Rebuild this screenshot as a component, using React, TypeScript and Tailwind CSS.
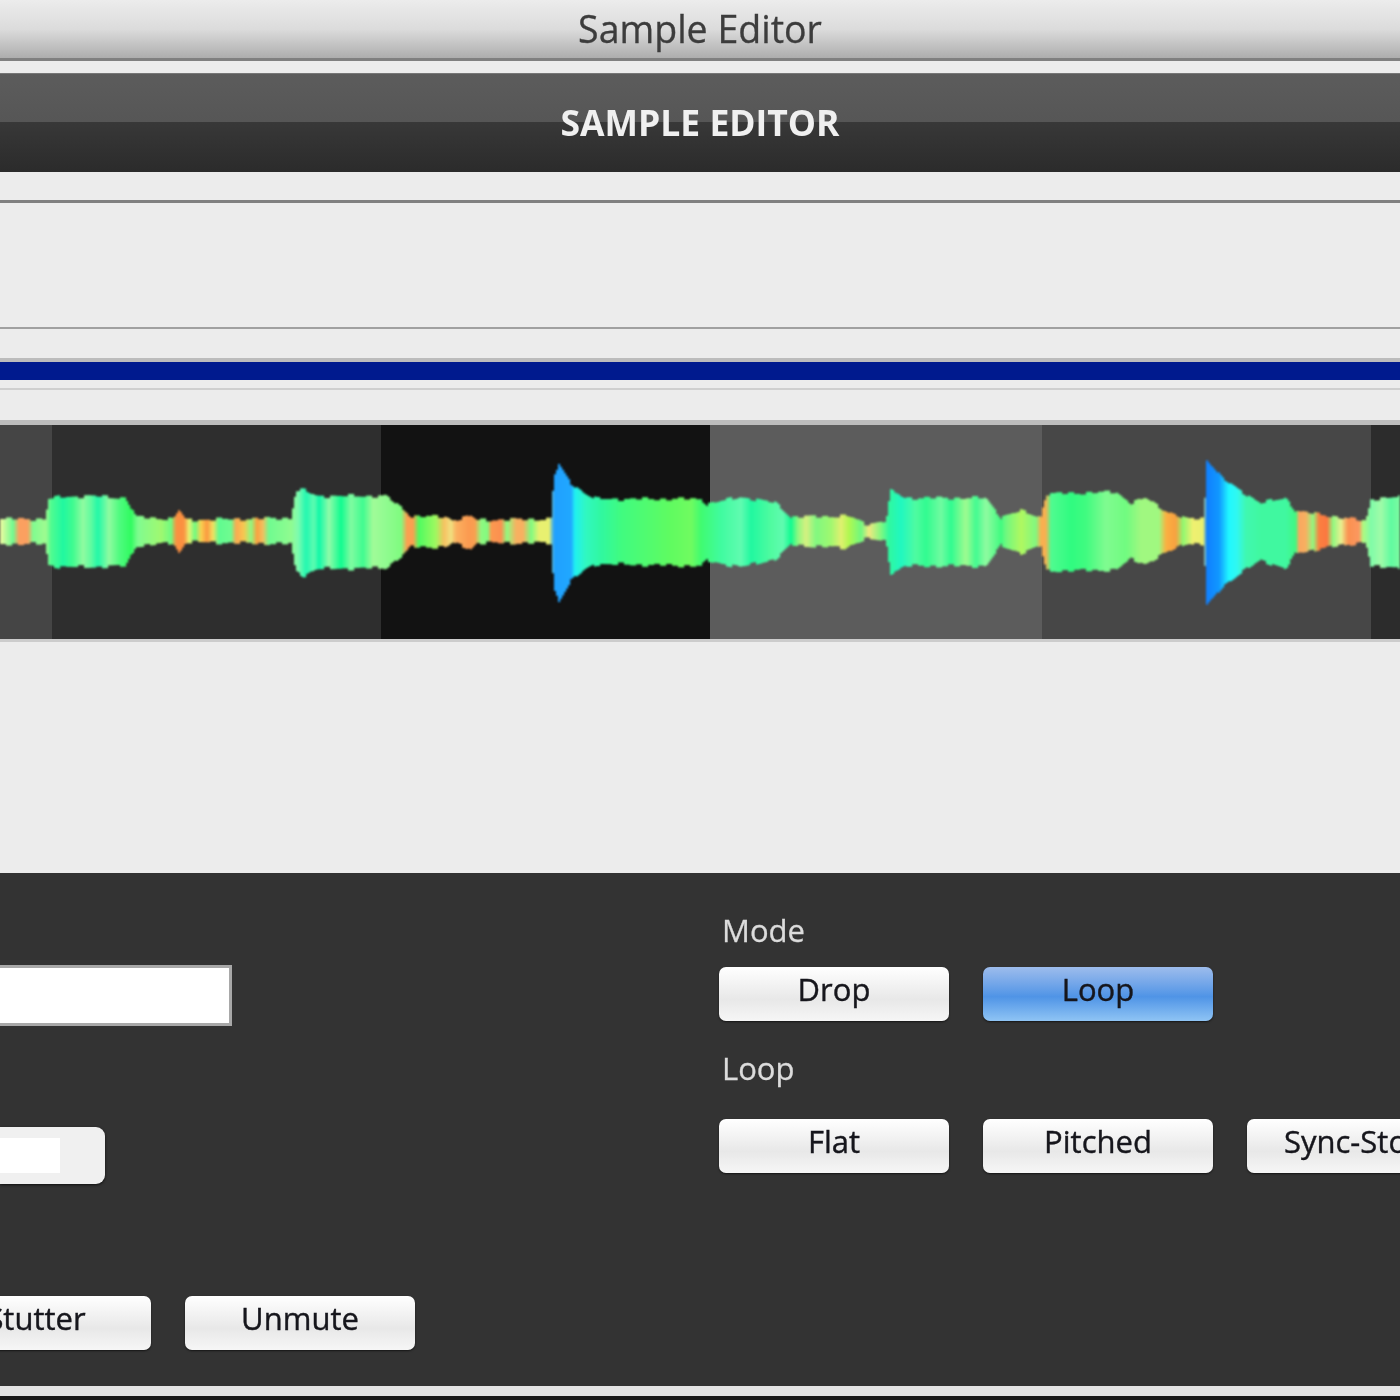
import React from 'react';

const FONT = "font-['Open_Sans','Noto_Sans',sans-serif]";

// x, height above centre, height below centre
const envelope: [number, number, number][] = [
  [0, 12, 13], [44, 12, 13], [48, 32, 34], [60, 34, 36], [90, 35, 36], [125, 33, 35], [135, 14, 15], [172, 12, 12], [178, 21, 22], [185, 11, 11],
  [290, 13, 13], [295, 40, 40], [303, 41, 45], [315, 35, 38], [385, 35, 37], [402, 22, 24], [410, 15, 16], [445, 14, 16], [452, 11, 12],
  [470, 15, 18], [476, 11, 12], [550, 12, 12], [553, 55, 58], [558, 66, 70], [570, 48, 50], [585, 37, 38], [595, 32, 33], [700, 32, 35], [706, 27, 30],
  [740, 34, 36], [775, 28, 28], [790, 14, 14], [846, 15, 17], [850, 14, 14], [865, 7, 8], [885, 10, 10], [890, 40, 42], [905, 33, 35], [985, 33, 35], [1000, 14, 15],
  [1020, 20, 22], [1040, 14, 15], [1045, 37, 40], [1115, 39, 39], [1130, 28, 28], [1145, 33, 33], [1165, 20, 22], [1185, 12, 12], [1203, 13, 14],
  [1206, 72, 75], [1222, 52, 55], [1240, 40, 42], [1260, 28, 29], [1285, 33, 38], [1295, 20, 22], [1330, 15, 16], [1365, 10, 11], [1370, 32, 36], [1400, 34, 36],
];

// colour stops along the wave, blended between neighbours
const stops: [number, string][] = [
  [0, '#e8fba0'], [12, '#70fb90'], [18, '#fba060'], [27, '#fba060'], [32, '#80fb90'], [45, '#a0fb90'], [50, '#50fb90'], [62, '#20f8a0'], [72, '#40fb90'], [82, '#90fba0'],
  [90, '#60fba0'], [97, '#20f8a8'], [108, '#90fba0'], [118, '#50fb80'], [130, '#30fb60'], [137, '#80fb90'], [160, '#a0f870'], [170, '#70fb80'], [175, '#fb9040'], [183, '#fb9040'],
  [188, '#e8f070'], [194, '#70fb80'], [200, '#f8d050'], [206, '#fb9a40'], [212, '#f0e060'], [218, '#60fb90'], [230, '#70fb90'], [235, '#fba850'], [243, '#f8c850'], [250, '#90f880'],
  [256, '#fba040'], [262, '#f0c060'], [268, '#70fb90'], [290, '#90fb90'], [297, '#80fbb0'], [305, '#20f8b0'], [313, '#60fbb0'], [318, '#10f8a8'], [328, '#90fba8'], [340, '#10fb90'],
  [350, '#80fba0'], [362, '#40fb90'], [372, '#a0fb98'], [385, '#90fb90'], [400, '#80fb80'], [406, '#fba050'], [412, '#fba050'], [418, '#50fb60'], [435, '#a0f860'], [443, '#f8c060'],
  [450, '#f0e080'], [455, '#fbb060'], [468, '#fb9a50'], [474, '#f8a050'], [480, '#90f880'], [487, '#80fb80'], [490, '#fb9a50'], [500, '#fb9050'], [506, '#90fb80'], [515, '#f8b060'],
  [522, '#f8b060'], [530, '#80fb80'], [538, '#e8f070'], [548, '#e8f070'], [553, '#20a0ff'], [570, '#20a8ff'], [574, '#20f0f0'], [585, '#30f8c0'], [600, '#30f8a0'], [620, '#40fb80'],
  [645, '#50fb70'], [670, '#60fb60'], [690, '#70fb60'], [700, '#40fb70'], [720, '#40fba0'], [740, '#60fbb0'], [750, '#20f8a0'], [770, '#50fba0'], [782, '#60fbb0'], [790, '#10fb90'],
  [797, '#90f880'], [805, '#d8f080'], [815, '#80f880'], [830, '#a0f870'], [840, '#e0f070'], [848, '#b0f850'], [860, '#70f880'], [868, '#f0e880'], [880, '#80f880'], [888, '#30f8a0'],
  [900, '#20f8c0'], [915, '#50fba0'], [925, '#30fb90'], [940, '#70fba0'], [950, '#30fb90'], [965, '#a0fb90'], [975, '#40fb90'], [985, '#90fba0'], [1000, '#40fb80'], [1005, '#70f880'],
  [1020, '#b0f860'], [1035, '#80f880'], [1040, '#f8b050'], [1045, '#f8b050'], [1050, '#50fb90'], [1070, '#30fb80'], [1085, '#40fb80'], [1105, '#80fb90'], [1125, '#70fb80'], [1140, '#a0f880'],
  [1158, '#a0f880'], [1165, '#fbb040'], [1175, '#f8a040'], [1182, '#90f870'], [1192, '#f0f070'], [1202, '#e8f070'], [1206, '#1080ff'], [1218, '#1098ff'], [1228, '#20f8ff'], [1236, '#30f8f0'],
  [1245, '#40f8b0'], [1260, '#40f8a0'], [1285, '#40f8a0'], [1295, '#40f880'], [1298, '#f8a860'], [1305, '#f8b060'], [1312, '#90f880'], [1318, '#fb8040'], [1326, '#fb7840'], [1332, '#90f880'],
  [1340, '#e8f090'], [1347, '#fb9050'], [1358, '#fb9860'], [1362, '#b0f880'], [1370, '#80fba8'], [1380, '#a0fba8'], [1390, '#60fba0'], [1400, '#80fba0'],
];

const lerp = (a: number, b: number, t: number) => a + (b - a) * t;

function sampleEnvelope(x: number): [number, number] {
  for (let i = 0; i < envelope.length - 1; i++) {
    const [x0, u0, d0] = envelope[i];
    const [x1, u1, d1] = envelope[i + 1];
    if (x >= x0 && x <= x1) {
      const t = (x - x0) / Math.max(x1 - x0, 1);
      return [lerp(u0, u1, t), lerp(d0, d1, t)];
    }
  }
  return [12, 12];
}

const channel = (hex: string, at: number) => parseInt(hex.slice(at, at + 2), 16);

function colourAt(x: number) {
  for (let i = 0; i < stops.length - 1; i++) {
    const [x0, c0] = stops[i];
    const [x1, c1] = stops[i + 1];
    if (x >= x0 && x <= x1) {
      const t = (x - x0) / (x1 - x0);
      const r = Math.round(lerp(channel(c0, 1), channel(c1, 1), t));
      const g = Math.round(lerp(channel(c0, 3), channel(c1, 3), t));
      const b = Math.round(lerp(channel(c0, 5), channel(c1, 5), t));
      return `rgb(${r},${g},${b})`;
    }
  }
  return stops[stops.length - 1][1];
}

const Waveform: React.FC = () => {
  const cols = [];
  for (let x = 0; x < 1400; x += 2) {
    const [up, down] = sampleEnvelope(x);
    const step = Math.floor(x / 6);
    const jag = Math.sin(step * 2.3) * 1.3 + Math.sin(step * 0.9) * 0.8;
    cols.push(<rect key={x} x={x} y={106 - up - jag} width={2.2} height={up + down + jag * 2} fill={colourAt(x)} />);
  }
  return (
    <svg className="absolute inset-0 blur-[0.8px]" width={1400} height={214} viewBox="0 0 1400 214">
      {cols}
    </svg>
  );
};

const Button: React.FC<{ label: string; active?: boolean; className?: string }> = ({ label, active, className = '' }) => (
  <button
    className={`w-[230px] h-[54px] shrink-0 rounded-[7px] pb-[10px] text-[31px] leading-none text-[#16161c] [-webkit-text-stroke:0.4px_#16161c] shadow-[0_1px_2px_rgba(0,0,0,0.6)] ${className} ${
      active
        ? 'bg-gradient-to-b from-[#9dbcec] via-[#4f94e6] via-55% to-[#8fc4f4]'
        : 'bg-gradient-to-b from-[#ffffff] via-[#e8e8e8] via-60% to-[#f6f6f6]'
    }`}
  >
    {label}
  </button>
);

const Rule: React.FC<{ className: string }> = ({ className }) => <div className={`shrink-0 ${className}`} />;

const App: React.FC = () => {
  return (
    <div className={`w-[1400px] h-[1400px] overflow-hidden bg-[#ececec] flex flex-col blur-[0.5px] ${FONT}`}>
      {/* window title */}
      <div className="h-[58px] shrink-0 bg-gradient-to-b from-[#ececec] via-[#dcdcdc] to-[#aeaeae] flex items-center justify-center">
        <span className="text-[37.5px] leading-none text-[#3c3c3c] [-webkit-text-stroke:0.3px_#3c3c3c]">Sample Editor</span>
      </div>
      <Rule className="h-[3px] bg-[#808080]" />
      <div className="h-[12px] shrink-0" />

      {/* header bar */}
      <div className="relative h-[99px] shrink-0 flex flex-col border-t border-[#777]">
        <div className="h-[48px] bg-gradient-to-b from-[#5c5c5c] to-[#565656]" />
        <div className="flex-1 bg-gradient-to-b from-[#383838] to-[#2b2b2b]" />
        <div className="absolute inset-0 flex items-center justify-center">
          <span className="text-[35.5px] leading-none font-bold text-[#f0f0f0]">SAMPLE EDITOR</span>
        </div>
      </div>

      <div className="h-[28px] shrink-0" />
      <Rule className="h-[3px] bg-[#808080]" />
      <div className="h-[124px] shrink-0" />
      <Rule className="h-[2px] bg-[#a0a0a0]" />
      <div className="h-[29px] shrink-0" />
      <Rule className="h-[4px] bg-[#bcbcbc]" />
      <Rule className="h-[18px] bg-[#001a8e]" />
      <div className="h-[8px] shrink-0" />
      <Rule className="h-[2px] bg-[#cfcfcf]" />
      <div className="h-[30px] shrink-0" />
      <Rule className="h-[5px] bg-[#bdbdbd]" />

      {/* waveform */}
      <div className="relative h-[214px] shrink-0 flex">
        <div className="w-[52px] bg-[#454545]" />
        <div className="w-[329px] bg-[#2e2e2e]" />
        <div className="w-[329px] bg-[#121212]" />
        <div className="w-[332px] bg-[#5c5c5c]" />
        <div className="w-[329px] bg-[#474747]" />
        <div className="flex-1 bg-[#2c2c2c]" />
        <Waveform />
      </div>
      <Rule className="h-[3px] bg-[#cccccc]" />
      <div className="h-[231px] shrink-0" />

      {/* controls */}
      <div className="h-[513px] shrink-0 bg-[#333333] flex overflow-hidden">
        <div className="w-[719px] shrink-0 flex flex-col pt-[92px]">
          <div className="w-[232px] h-[61px] bg-white border-[3px] border-l-0 border-[#a8a8a8]" />
          <div className="mt-[101px] w-[105px] h-[57px] rounded-r-[9px] bg-[#f0f0f0] shadow-[0_1px_3px_rgba(0,0,0,0.7)] flex items-center">
            <div className="w-[60px] h-[35px] bg-white" />
          </div>
          <div className="mt-[112px] -ml-[79px] flex gap-[34px]">
            <Button label="Stutter" />
            <Button label="Unmute" />
          </div>
        </div>
        <div className="flex flex-col">
          <span className="mt-[37px] ml-[3px] h-[40px] text-[31px] leading-[40px] text-[#dcdcdc] [-webkit-text-stroke:0.3px_#dcdcdc]">Mode</span>
          <div className="mt-[17px] flex gap-[34px]">
            <Button label="Drop" />
            <Button label="Loop" active />
          </div>
          <span className="mt-[27px] ml-[3px] h-[40px] text-[31px] leading-[40px] text-[#dcdcdc] [-webkit-text-stroke:0.3px_#dcdcdc]">Loop</span>
          <div className="mt-[31px] flex gap-[34px]">
            <Button label="Flat" />
            <Button label="Pitched" />
            <Button label="Sync-Stop" className="pr-[14px]" />
          </div>
        </div>
      </div>

      <div className="h-[10px] shrink-0 bg-[#e4e4e4]" />
      <div className="flex-1 bg-[#1a1a1a]" />
    </div>
  );
};

export default App;
